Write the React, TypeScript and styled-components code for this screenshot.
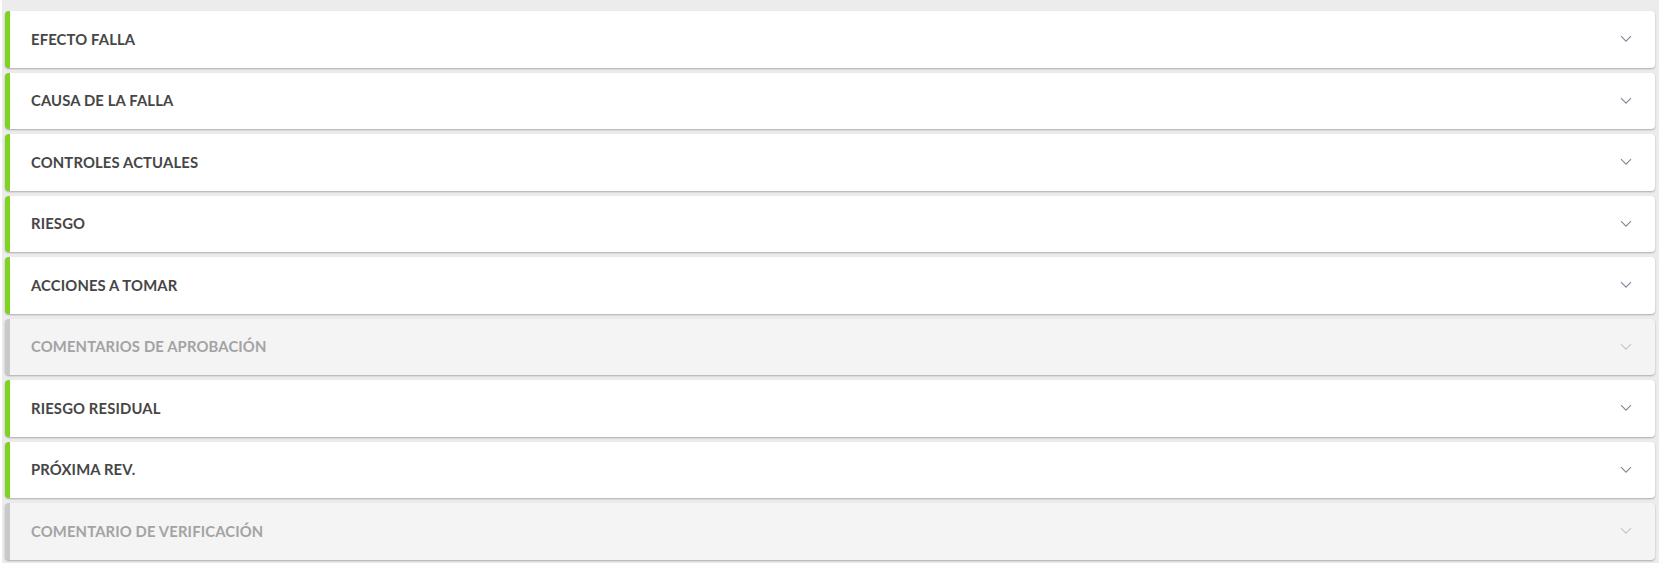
import React from 'react'
import styled, { createGlobalStyle } from 'styled-components';

const GlobalStyle = createGlobalStyle`
  html, body {
    margin: 0;
    padding: 0;
    background: #ffffff;
  }
  body {
    font-family: Lato, "Noto Sans", "Liberation Sans", sans-serif;
  }
`;

interface SectionType {
    title: string;
    disabled?: boolean;
}

const sections: SectionType[] = [
    { title: 'EFECTO FALLA' },
    { title: 'CAUSA DE LA FALLA' },
    { title: 'CONTROLES ACTUALES' },
    { title: 'RIESGO' },
    { title: 'ACCIONES A TOMAR' },
    { title: 'COMENTARIOS DE APROBACIÓN', disabled: true },
    { title: 'RIESGO RESIDUAL' },
    { title: 'PRÓXIMA REV.' },
    { title: 'COMENTARIO DE VERIFICACIÓN', disabled: true },
];

const Chevron: React.FC<{ disabled?: boolean }> = ({ disabled }) => (
    <ChevronIcon width="12" height="8" viewBox="0 0 12 8" $disabled={disabled}>
        <path d="M1 1.2 L6 6.2 L11 1.2" fill="none" strokeWidth="1.1" />
    </ChevronIcon>
);

export const Section: React.FC<SectionType> = ({ title, disabled }) => {

    return (

        <Card $disabled={disabled}>

            <Title $disabled={disabled}>

                {title}

            </Title>

            <Chevron disabled={disabled} />

        </Card>
    );
};

export default function App() {

    return (
        <>
            <GlobalStyle />

            <Panel>

                {sections.map((s) => (
                    <Section key={s.title} title={s.title} disabled={s.disabled} />
                ))}

            </Panel>
        </>
    );
}

export const Panel = styled.div`
  margin-left: 2px;
  width: 1657px;
  box-sizing: border-box;
  padding: 11px 4px 3px 3px;
  background: #ececec;
  display: flex;
  flex-direction: column;
  gap: 5px;
`;

export const Card = styled.div<{ $disabled?: boolean }>`
  display: flex;
  align-items: center;
  justify-content: space-between;
  height: 56.5px;
  box-sizing: border-box;
  padding: 0 23px 0 21px;
  border-radius: 4px;
  border-left: 5px solid ${(p) => (p.$disabled ? '#c9c9c9' : '#7ed321')};
  background: ${(p) => (p.$disabled ? '#f4f4f4' : '#ffffff')};
  box-shadow: 0 1px 2px rgba(0, 0, 0, 0.28);
`;

export const Title = styled.span<{ $disabled?: boolean }>`
  font-size: 14.8px;
  font-weight: 700;
  letter-spacing: 0.15px;
  margin-top: -1px;
  color: ${(p) => (p.$disabled ? '#a3a3a3' : '#464646')};
`;

export const ChevronIcon = styled.svg<{ $disabled?: boolean }>`
  flex-shrink: 0;
  stroke: ${(p) => (p.$disabled ? '#c4c4c4' : '#7f8794')};
`;
